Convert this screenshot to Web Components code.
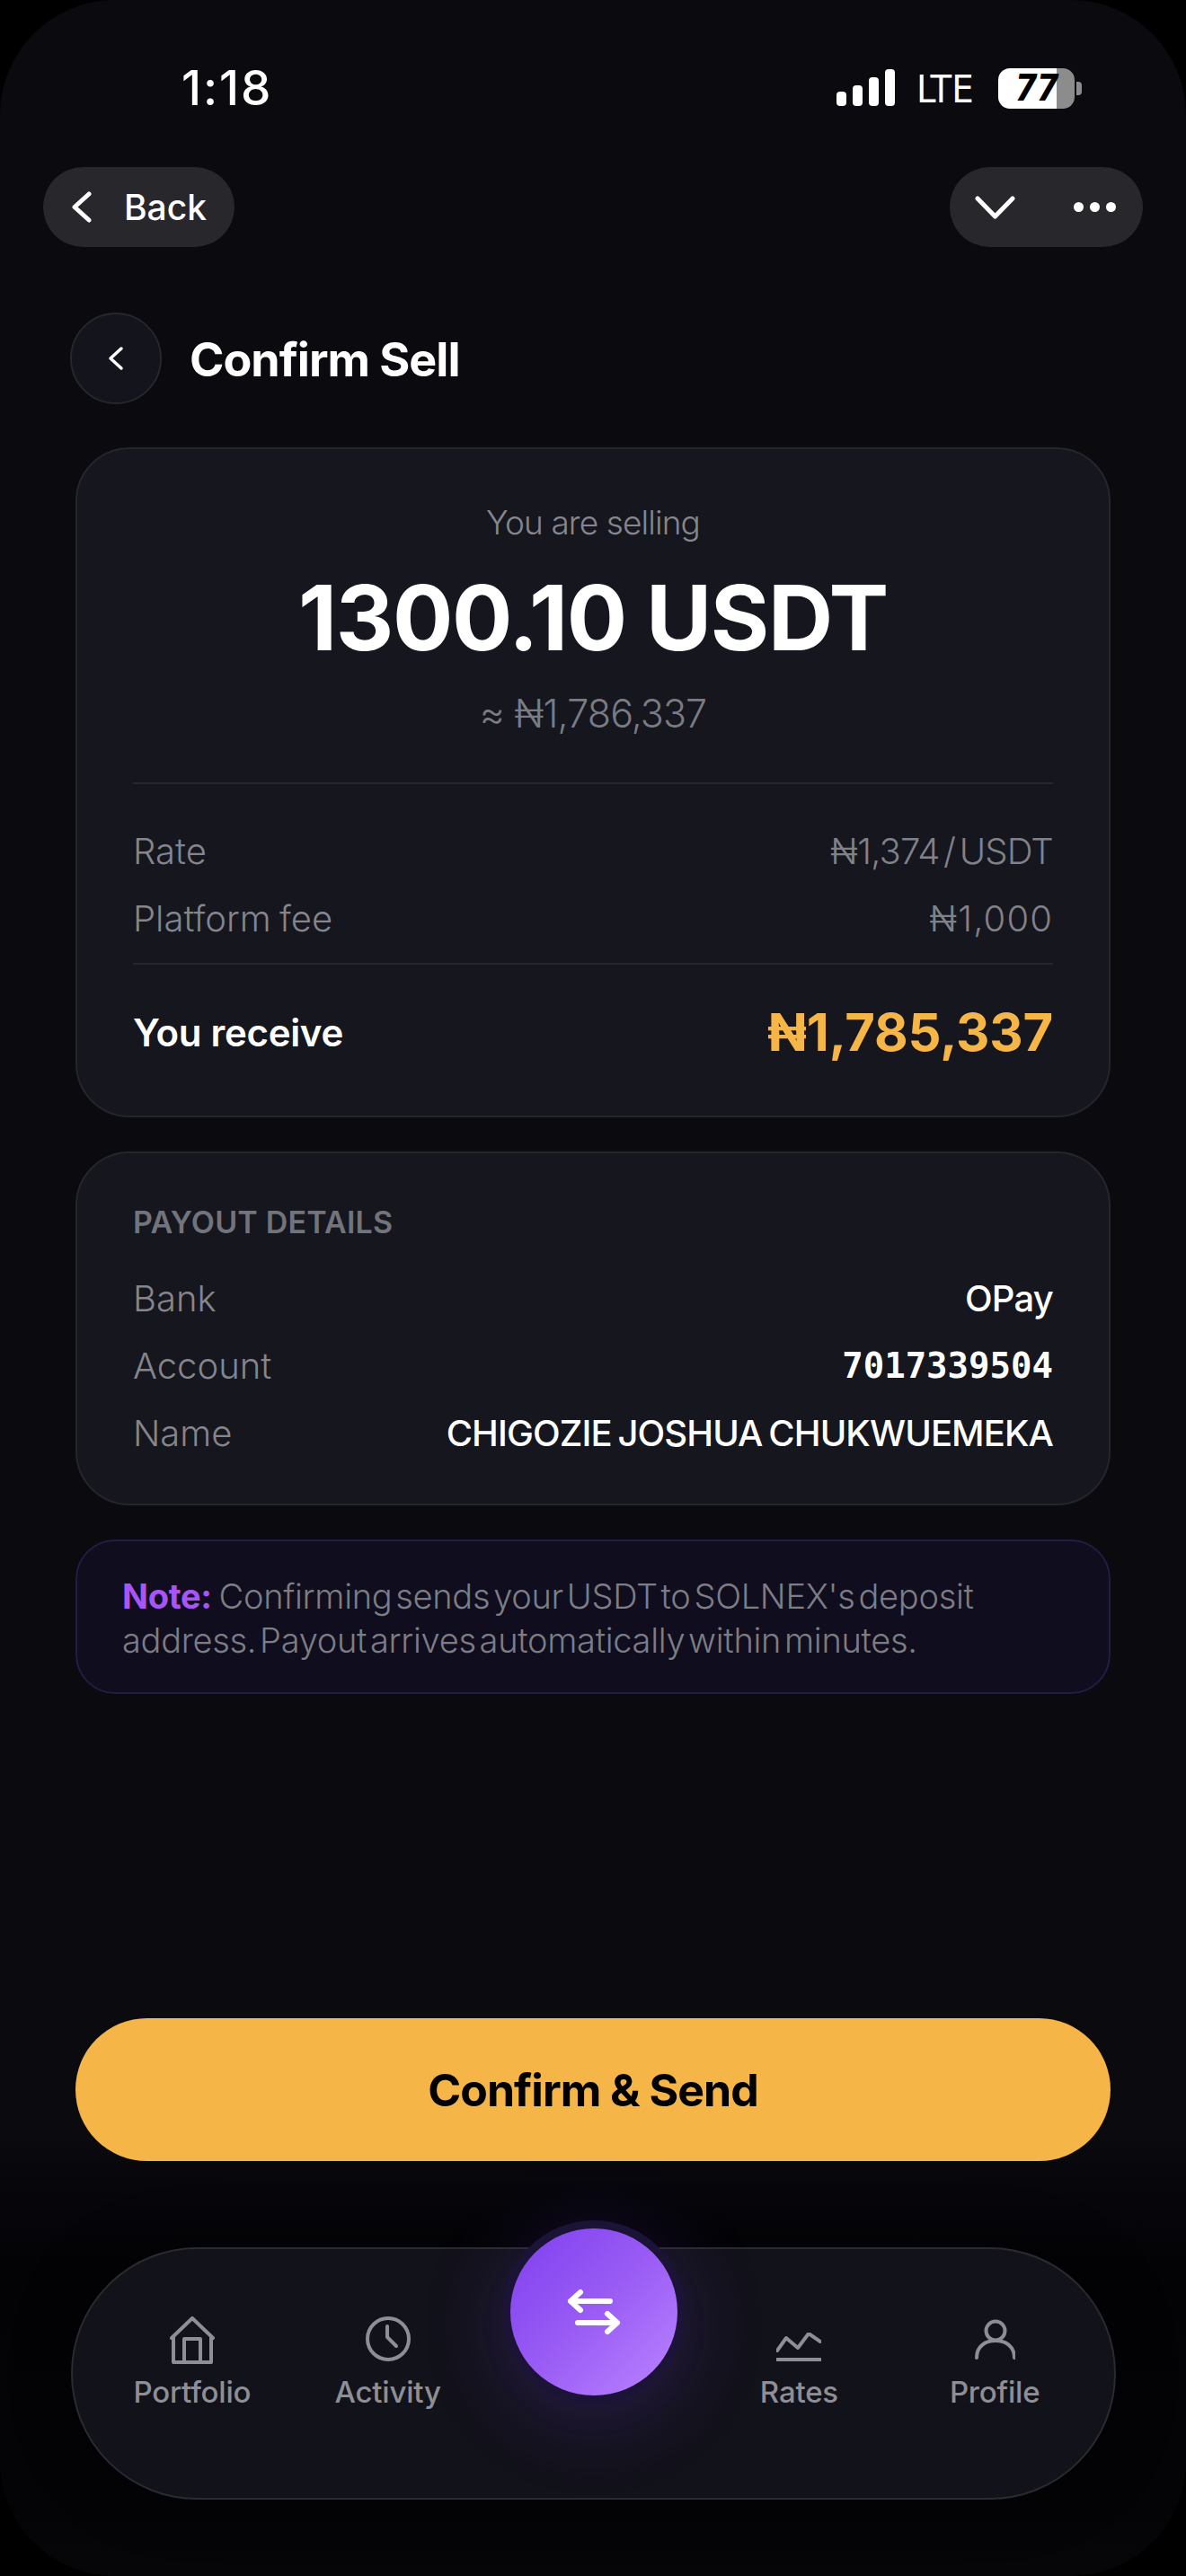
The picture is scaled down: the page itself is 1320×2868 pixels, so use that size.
<!DOCTYPE html>
<html lang="en">
<head>
<meta charset="utf-8">
<title>Confirm Sell</title>
<style>
  html, body { margin: 0; padding: 0; background: #000; width: 1320px; height: 2868px; overflow: hidden; }
  body { font-family: Inter, "Noto Sans", sans-serif; color: #fff; }
</style>
</head>
<body>
<phone-screen>
  <status-bar></status-bar>
  <top-toolbar></top-toolbar>
  <page-header>Confirm Sell</page-header>

  <info-card class="summary">
    <amount-hero label="You are selling" amount="1300.10 USDT" approx="≈ ₦1,786,337"></amount-hero>
    <card-divider style="margin-top:47px"></card-divider>
    <detail-row style="margin-top:50px"><span slot="label">Rate</span><span style="letter-spacing:-.8px;word-spacing:-6px">₦1,374 / USDT</span></detail-row>
    <detail-row style="margin-top:25px"><span slot="label">Platform fee</span><span style="letter-spacing:1.1px">₦1,000</span></detail-row>
    <card-divider style="margin-top:24px"></card-divider>
    <total-row label="You receive" value="₦1,785,337"></total-row>
  </info-card>

  <info-card class="payout">
    <card-heading>PAYOUT DETAILS</card-heading>
    <detail-row tone="bright" style="margin-top:38px"><span slot="label">Bank</span>OPay</detail-row>
    <detail-row tone="mono" style="margin-top:25px"><span slot="label">Account</span>7017339504</detail-row>
    <detail-row tone="bright" style="margin-top:25px"><span slot="label">Name</span><span style="letter-spacing:-.9px;word-spacing:-3px">CHIGOZIE JOSHUA CHUKWUEMEKA</span></detail-row>
  </info-card>

  <note-box><b slot="lead">Note:</b> Confirming sends your USDT to SOLNEX's deposit address. Payout arrives automatically within minutes.</note-box>

  <action-button>Confirm &amp; Send</action-button>

  <bottom-nav>
    <nav-item label="Portfolio" icon="home"></nav-item>
    <nav-item label="Activity" icon="clock"></nav-item>
    <swap-fab></swap-fab>
    <nav-item label="Rates" icon="rates"></nav-item>
    <nav-item label="Profile" icon="user"></nav-item>
  </bottom-nav>
</phone-screen>

<script>
class BaseElement extends HTMLElement {
  constructor() {
    super();
    this.shadowDOM = this.attachShadow({ mode: "open" });
  }
  connectedCallback() {
    this.render();
  }
}

class PhoneScreen extends BaseElement {
  render() {
    this.shadowDOM.innerHTML = `
      <style>
      :host {
        display: flex;
        flex-direction: column;
        box-sizing: border-box;
        width: 1320px;
        height: 2868px;
        overflow: hidden;
        border-radius: 128px;
        background: linear-gradient(#0a0a0f 0, #0a0a0f 2370px, #030306 2520px, #040407 2800px, #060609 100%);
        font-family: Inter, "Noto Sans", sans-serif;
      }
      </style>
      <slot></slot>
    `;
  }
}

class StatusBar extends BaseElement {
  render() {
    this.shadowDOM.innerHTML = `
      <style>
      :host {
        display: flex;
        align-items: center;
        justify-content: space-between;
        box-sizing: border-box;
        height: 150px;
        padding: 46px 116px 0 202px;
        color: #fff;
      }
      .time { font-size: 53px; font-weight: 500; letter-spacing: 2px; line-height: 104px; }
      .right { display: flex; align-items: center; }
      .bars { display: flex; align-items: flex-end; gap: 7px; height: 41px; margin-top: -1px; }
      .bars i { display: block; width: 11px; background: #fff; border-radius: 4px; }
      .lte {
        margin-left: 24px;
        font-family: "DejaVu Sans", sans-serif;
        font-stretch: condensed;
        font-size: 43px;
        line-height: 46px;
        width: 63px;
        letter-spacing: 0;
        margin-top: 2px;
      }
      .battery {
        display: flex;
        justify-content: center;
        margin-left: 28px;
        width: 85px;
        height: 45px;
        border-radius: 13px;
        overflow: hidden;
        background: linear-gradient(90deg, #fff 0, #fff 65px, #8c8c8c 65px);
        color: #000;
        font-family: "DejaVu Sans", sans-serif;
        font-stretch: condensed;
        font-size: 40px;
        font-weight: 700;
        font-style: italic;
        line-height: 45px;
        letter-spacing: -1px;
      }
      .nub { width: 6px; height: 15px; margin-left: 2px; background: #8c8c8c; border-radius: 0 4px 4px 0; }
      </style>
      <div class="time">1:18</div>
      <div class="right">
        <div class="bars">
          <i style="height:16px"></i><i style="height:23px"></i><i style="height:32px"></i><i style="height:41px"></i>
        </div>
        <div class="lte">LTE</div>
        <div class="battery"><span>77</span></div>
        <div class="nub"></div>
      </div>
    `;
  }
}

class TopToolbar extends BaseElement {
  render() {
    this.shadowDOM.innerHTML = `
      <style>
      :host {
        display: flex;
        justify-content: space-between;
        margin: 36px 48px 0;
      }
      .pill {
        display: flex;
        align-items: center;
        box-sizing: border-box;
        height: 89px;
        border-radius: 45px;
        background: #27272c;
        color: #fff;
      }
      .back { width: 213px; padding-left: 32px; gap: 36px; }
      .back span { font-size: 39px; font-weight: 500; letter-spacing: 0; }
      .menu { width: 215px; padding-left: 28px; }
      .dots { display: flex; gap: 7px; margin-left: 65px; }
      .dots i { width: 11px; height: 11px; border-radius: 50%; background: #fff; }
      svg { display: block; fill: none; stroke: #fff; stroke-linecap: round; stroke-linejoin: round; }
      </style>
      <div class="pill back">
        <svg width="22" height="35" viewBox="0 0 22 35" stroke-width="5"><path d="M19 3 3 17.5 19 32"/></svg>
        <span>Back</span>
      </div>
      <div class="pill menu">
        <svg width="45" height="26" viewBox="0 0 45 26" stroke-width="5"><path d="M3 3 22.5 23 42 3"/></svg>
        <div class="dots"><i></i><i></i><i></i></div>
      </div>
    `;
  }
}

class PageHeader extends BaseElement {
  render() {
    this.shadowDOM.innerHTML = `
      <style>
      :host {
        display: flex;
        align-items: center;
        gap: 31px;
        margin: 73px 78px 0;
      }
      .circle {
        display: flex;
        align-items: center;
        justify-content: center;
        box-sizing: border-box;
        width: 102px;
        height: 102px;
        border-radius: 50%;
        background: #14151c;
        border: 2px solid #26272d;
      }
      svg { display: block; fill: none; stroke: #fff; stroke-width: 3.5; stroke-linecap: round; stroke-linejoin: round; }
      h1 { margin: 3px 0 0; font-size: 52px; font-weight: 700; letter-spacing: -1px; color: #fff; }
      </style>
      <div class="circle">
        <svg width="18" height="28" viewBox="0 0 18 28"><path d="M15 3 3 14 15 25"/></svg>
      </div>
      <h1><slot></slot></h1>
    `;
  }
}

class InfoCard extends BaseElement {
  render() {
    this.shadowDOM.innerHTML = `
      <style>
      :host {
        display: block;
        box-sizing: border-box;
        margin: 0 84px;
        padding: 0 62px;
        border: 2.5px solid #25262c;
        border-radius: 60px;
        background: #15161e;
      }
      :host(.summary) { margin-top: 48px; height: 746px; padding-top: 57px; }
      :host(.payout) { margin-top: 38px; height: 394px; padding-top: 55px; }
      </style>
      <slot></slot>
    `;
  }
}

class AmountHero extends BaseElement {
  render() {
    this.shadowDOM.innerHTML = `
      <style>
      :host { display: block; text-align: center; }
      .label { font-size: 37px; font-weight: 300; line-height: 50px; letter-spacing: -0.9px; color: #85868e; }
      .amount { margin-top: 26px; font-size: 100px; font-weight: 700; line-height: 110px; letter-spacing: -1.4px; color: #fff; }
      .approx { margin-top: 21px; font-size: 43px; font-weight: 300; line-height: 60px; letter-spacing: -0.9px; color: #7a7b83; }
      </style>
      <div class="label">${this.getAttribute("label")}</div>
      <div class="amount">${this.getAttribute("amount")}</div>
      <div class="approx">${this.getAttribute("approx")}</div>
    `;
  }
}

class CardDivider extends BaseElement {
  render() {
    this.shadowDOM.innerHTML = `
      <style>
      :host { display: block; height: 2px; background: #25262e; }
      </style>
    `;
  }
}

class DetailRow extends BaseElement {
  render() {
    const tone = this.getAttribute("tone");
    const valueStyle = tone === "mono"
      ? `font-family: "DejaVu Sans Mono", monospace; font-weight: 700; font-size: 39px; color: #fff; letter-spacing: 0;`
      : tone === "bright"
        ? `font-weight: 500; color: #fff; letter-spacing: -0.8px;`
        : `font-weight: 300; color: #808189; letter-spacing: 0.2px;`;
    this.shadowDOM.innerHTML = `
      <style>
      :host {
        display: flex;
        justify-content: space-between;
        align-items: center;
        height: 50px;
        font-size: 40px;
        line-height: 50px;
        white-space: nowrap;
      }
      .label { font-weight: 300; color: #84858d; letter-spacing: 0; word-spacing: -2px; }
      .value { ${valueStyle} }
      </style>
      <div class="label"><slot name="label"></slot></div>
      <div class="value"><slot></slot></div>
    `;
  }
}

class TotalRow extends BaseElement {
  render() {
    this.shadowDOM.innerHTML = `
      <style>
      :host {
        display: flex;
        justify-content: space-between;
        align-items: center;
        height: 70px;
        margin-top: 40px;
      }
      .label { font-size: 42px; font-weight: 600; letter-spacing: -0.3px; color: #fff; }
      .value { font-size: 58px; font-weight: 700; letter-spacing: -0.2px; color: #f5b547; }
      </style>
      <div class="label">${this.getAttribute("label")}</div>
      <div class="value">${this.getAttribute("value")}</div>
    `;
  }
}

class CardHeading extends BaseElement {
  render() {
    this.shadowDOM.innerHTML = `
      <style>
      :host {
        display: block;
        font-size: 34px;
        font-weight: 600;
        line-height: 44px;
        letter-spacing: 0.2px;
        color: #72737b;
      }
      </style>
      <slot></slot>
    `;
  }
}

class NoteBox extends BaseElement {
  render() {
    this.shadowDOM.innerHTML = `
      <style>
      :host {
        display: block;
        box-sizing: border-box;
        margin: 38px 84px 0;
        height: 172px;
        padding: 37px 50px 0;
        border: 2.5px solid #241c45;
        border-radius: 44px;
        background: #100d1e;
        font-size: 38px;
        font-weight: 300;
        line-height: 49px;
        letter-spacing: -0.3px;
        word-spacing: -6.5px;
        color: #7c7d85;
      }
      ::slotted(b) { color: #a855f7; font-weight: 700; margin-right: 4px; }
      </style>
      <slot name="lead"></slot>
      <slot></slot>
    `;
  }
}

class ActionButton extends BaseElement {
  render() {
    this.shadowDOM.innerHTML = `
      <style>
      :host {
        display: flex;
        align-items: center;
        justify-content: center;
        margin: auto 84px 0;
        height: 159px;
        border-radius: 80px;
        background: #f5b547;
        color: #000;
        font-size: 50px;
        font-weight: 700;
        letter-spacing: -1px;
      }
      </style>
      <slot></slot>
    `;
  }
}

class BottomNav extends BaseElement {
  render() {
    this.shadowDOM.innerHTML = `
      <style>
      :host {
        display: grid;
        grid-template-columns: 1fr 1fr 240px 1fr 1fr;
        align-items: start;
        box-sizing: border-box;
        margin: 96px 78px 85px 79px;
        height: 281px;
        padding: 75px 24px 0;
        border: 2.5px solid #2a2a30;
        border-radius: 141px;
        background: #12121a;
        box-shadow: 0 0 60px rgba(0, 0, 0, .5);
      }
      </style>
      <slot></slot>
    `;
  }
}

const NAV_ICONS = {
  home: `<svg width="50" height="53" viewBox="0 0 50 53"><path d="M2 24 25 2 48 24M4 22V51H46V22M16 51V25H34V51"/></svg>`,
  clock: `<svg width="50" height="50" viewBox="0 0 50 50"><circle cx="25" cy="25" r="23"/><path d="M24 11V23L34 33"/></svg>`,
  rates: `<svg style="margin-top:18px" width="50" height="32" viewBox="0 0 50 32"><path d="M1 20 11 6 24 17 36 1 49 10M1 30H49"/></svg>`,
  user: `<svg style="margin-top:3px" width="45" height="45" viewBox="0 0 45 45"><circle cx="23" cy="13" r="10.5"/><path d="M2 43C2 30 12 24 23 24S44 30 44 43"/></svg>`
};

class NavItem extends BaseElement {
  render() {
    this.shadowDOM.innerHTML = `
      <style>
      :host {
        display: flex;
        flex-direction: column;
        align-items: center;
        color: #8e8e96;
      }
      .icon { height: 53px; }
      svg { display: block; fill: none; stroke: #8e8e96; stroke-width: 4; stroke-linecap: round; stroke-linejoin: round; }
      .label { margin-top: 9px; font-size: 33px; font-weight: 500; line-height: 44px; letter-spacing: -0.2px; }
      </style>
      <div class="icon">${NAV_ICONS[this.getAttribute("icon")]}</div>
      <div class="label">${this.getAttribute("label")}</div>
    `;
  }
}

class SwapFab extends BaseElement {
  render() {
    this.shadowDOM.innerHTML = `
      <style>
      :host {
        display: block;
        justify-self: center;
        margin-top: -98px;
        width: 186px;
        height: 186px;
        border-radius: 50%;
        background: linear-gradient(135deg, #7f3fee 0%, #9a5cf5 50%, #bb85ff 100%);
        box-shadow: 0 0 0 9px #1b1437, 0 16px 90px 10px rgba(124, 58, 237, .22);
      }
      svg { display: block; fill: none; stroke: #fff; stroke-width: 6; stroke-linecap: round; stroke-linejoin: round; }
      </style>
      <svg width="186" height="186" viewBox="0 0 186 186">
        <path d="M111 81H67M78 71 67 81 78 91M75 105H118M108 95 119 105 108 115"/>
      </svg>
    `;
  }
}

customElements.define("phone-screen", PhoneScreen);
customElements.define("status-bar", StatusBar);
customElements.define("top-toolbar", TopToolbar);
customElements.define("page-header", PageHeader);
customElements.define("info-card", InfoCard);
customElements.define("amount-hero", AmountHero);
customElements.define("card-divider", CardDivider);
customElements.define("detail-row", DetailRow);
customElements.define("total-row", TotalRow);
customElements.define("card-heading", CardHeading);
customElements.define("note-box", NoteBox);
customElements.define("action-button", ActionButton);
customElements.define("bottom-nav", BottomNav);
customElements.define("nav-item", NavItem);
customElements.define("swap-fab", SwapFab);
</script>
</body>
</html>
